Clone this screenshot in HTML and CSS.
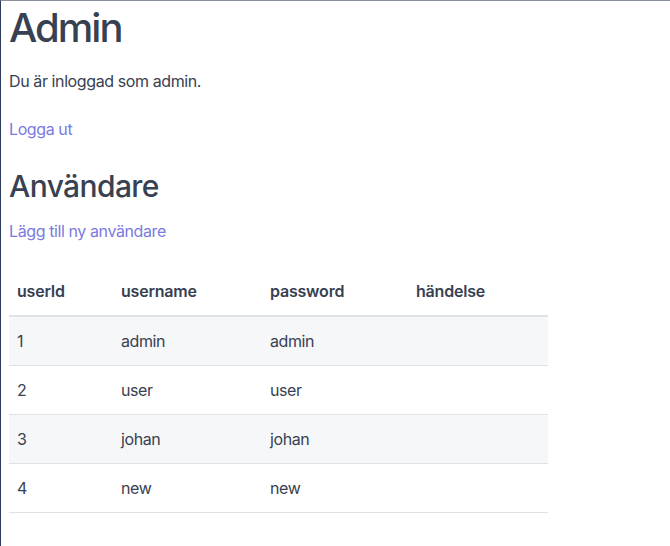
FILE: index.html
```html
<!DOCTYPE html>
<html lang="sv">
<head>
    <meta charset="UTF-8">
    <meta name="viewport" content="width=device-width, initial-scale=1.0">
    <title>Admin</title>
    <link rel="stylesheet" href="styles.css">
</head>
<body>
    <h1>Admin</h1>
    <p>Du är inloggad som admin.</p>
    <p><a href="#">Logga ut</a></p>

    <h2>Användare</h2>
    <p><a href="#">Lägg till ny användare</a></p>

    <table class="user-table">
        <thead>
            <tr>
                <th class="col-id">userId</th>
                <th class="col-name">username</th>
                <th class="col-pass">password</th>
                <th class="col-event">händelse</th>
            </tr>
        </thead>
        <tbody>
            <tr>
                <td>1</td>
                <td>admin</td>
                <td>admin</td>
                <td></td>
            </tr>
            <tr>
                <td>2</td>
                <td>user</td>
                <td>user</td>
                <td></td>
            </tr>
            <tr>
                <td>3</td>
                <td>johan</td>
                <td>johan</td>
                <td></td>
            </tr>
            <tr>
                <td>4</td>
                <td>new</td>
                <td>new</td>
                <td></td>
            </tr>
        </tbody>
    </table>
</body>
</html>
```

FILE: styles.css
```css
* {
    box-sizing: border-box;
}

html {
    height: 100%;
}

body {
    margin: 0;
    min-height: 100%;
    padding: 0 8px;
    border-top: 1px solid #8a9099;
    border-left: 1px solid #2d3c5a;
    background: #fff;
    color: #374151;
    font-family: Inter, "Noto Sans", sans-serif;
    font-size: 16px;
    line-height: 1.5;
    letter-spacing: -0.4px;
}

h1 {
    font-size: 40px;
    font-weight: 500;
    line-height: 1.125;
    letter-spacing: -2px;
    margin: 4px 0 19px;
}

h2 {
    font-size: 30px;
    font-weight: 500;
    line-height: 1.2;
    letter-spacing: -0.6px;
    margin: 27px 0 15px;
}

p {
    margin: 0 0 24px;
}

a {
    color: #7a7ae0;
    text-decoration: none;
}

.user-table {
    width: 539px;
    border-collapse: collapse;
    margin-top: 35px;
}

.user-table th,
.user-table td {
    text-align: left;
    padding: 12px 8px;
    border-bottom: 1px solid #dfe2e7;
}

.user-table th {
    font-weight: 600;
    letter-spacing: -0.2px;
    padding-top: 0;
    height: 38px;
    border-bottom: 2px solid #dfe2e7;
}

.user-table td {
    height: 49px;
}

.user-table tbody tr:nth-child(odd) {
    background-color: #f6f7f9;
}

.col-id { width: 104px; }
.col-name { width: 149px; }
.col-pass { width: 146px; }
.col-event { width: 140px; }
```
